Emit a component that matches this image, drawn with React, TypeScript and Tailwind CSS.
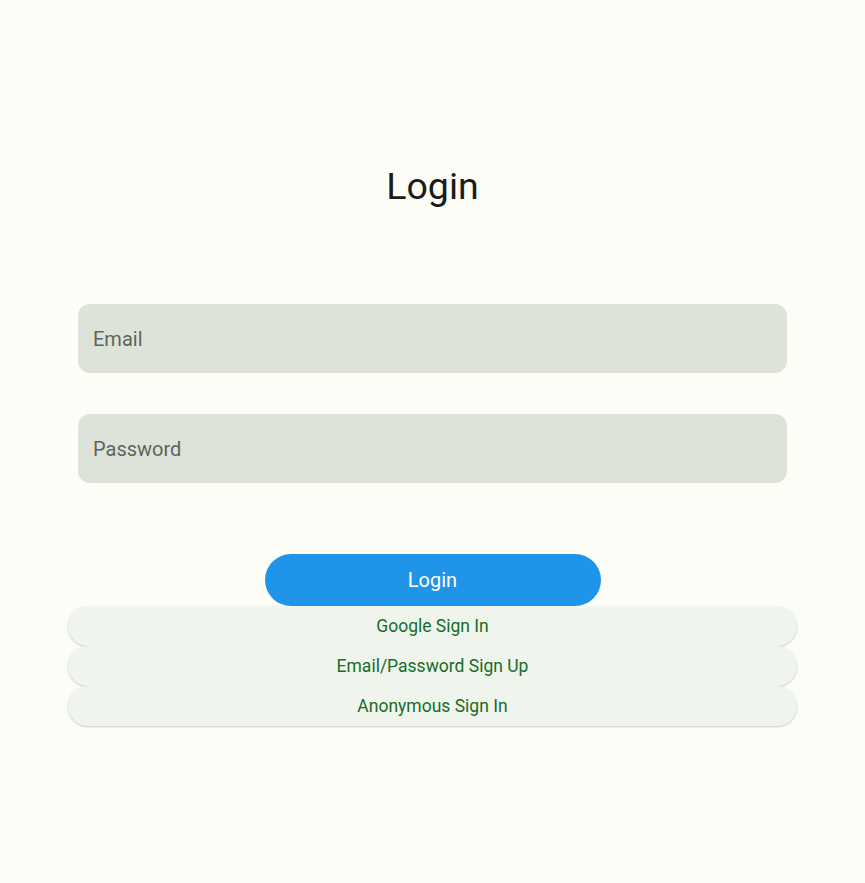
import React from 'react';

const font = { fontFamily: 'Roboto, "Liberation Sans", sans-serif' };

export default function App() {
  return (
    <div className="min-h-[883px] w-full bg-[#fcfdf6] flex flex-col items-stretch px-[68px]" style={font}>
      <h1 className="mt-[162px] h-[48px] flex items-center justify-center text-[37.5px] text-[#1b1c18] font-normal">
        Login
      </h1>

      <div className="mt-[94px] px-[10px] flex flex-col gap-[41px]">
        <div className="h-[69px] rounded-[12px] bg-[#dee3da] flex items-center px-[15px] text-[20px] text-[#5f635d]">
          Email
        </div>
        <div className="h-[69px] rounded-[12px] bg-[#dee3da] flex items-center px-[15px] text-[20px] text-[#5f635d]">
          Password
        </div>
      </div>

      <div className="mt-[71px] flex justify-center">
        <button className="w-[336px] h-[52px] rounded-full bg-[#2094e8] text-white text-[20px]">
          Login
        </button>
      </div>

      <div className="flex flex-col">
        {['Google Sign In', 'Email/Password Sign Up', 'Anonymous Sign In'].map((t) => (
          <button
            key={t}
            className="h-[40px] rounded-full bg-[#eff4ec] text-[#176d27] text-[17.5px] shadow-[0_1px_2px_rgba(0,0,0,0.2)]"
          >
            {t}
          </button>
        ))}
      </div>
    </div>
  );
}
